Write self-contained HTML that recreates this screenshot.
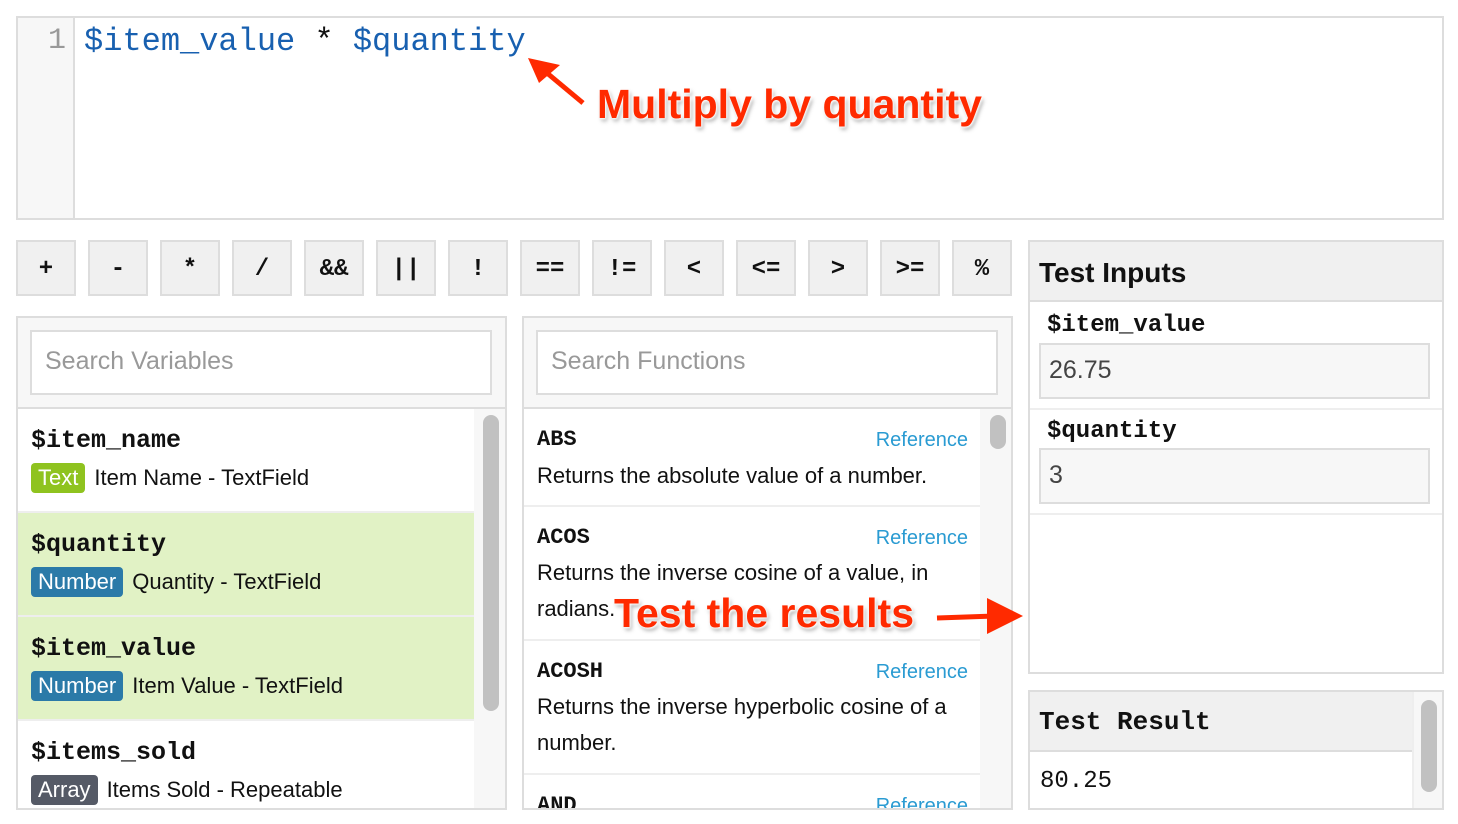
<!DOCTYPE html>
<html><head><style>
*{box-sizing:border-box;margin:0;padding:0}
body{width:1458px;height:824px;background:#fff;position:relative;overflow:hidden;font-family:"Liberation Sans",sans-serif;color:#111}
.a{position:absolute}
.mono{font-family:"Liberation Mono","Courier New",monospace}
.btn{position:absolute;top:240px;width:60px;height:56px;background:#f0f0f0;border:2px solid #ddd;font-family:"Liberation Mono",monospace;font-weight:bold;font-size:24px;text-align:center;line-height:56px}
.panel{position:absolute;border:2px solid #ddd;background:#f7f7f7}
.srch{position:absolute;background:#fff;border:2px solid #ddd;font-size:25px;color:#999;padding-left:13px;line-height:59px}
.item{position:absolute;left:0;width:456px;border-bottom:2px solid #eee}
.nm{position:absolute;left:13px;font-family:"Liberation Mono",monospace;font-weight:bold;font-size:25px}
.ds{position:absolute;left:13px;font-size:22px;white-space:nowrap}
.tag{display:inline-block;color:#fff;border-radius:4px;padding:0 7px;line-height:30px;margin-right:9px}
.fi{position:absolute;left:0;width:456px;border-bottom:2px solid #eee;background:#fff}
.ref{position:absolute;right:12px;color:#2a9bd2;font-size:20px}
.big{font-weight:bold;color:#ff2a00;font-size:41px;text-shadow:0 0 3px #fff,1px 1px 2px #fff,2px 3px 4px rgba(0,0,0,.35)}
</style></head><body>
<div class="a" style="left:16px;top:16px;width:1428px;height:204px;border:2px solid #ddd"></div>
<div class="a" style="left:18px;top:18px;width:57px;height:200px;background:#f7f7f7;border-right:2px solid #ddd"></div>
<div class="a mono" style="left:48px;top:24px;font-size:30px;color:#999">1</div>
<div class="a mono" style="left:84px;top:23px;font-size:32px;color:#1860b0;white-space:pre">$item_value <span style="color:#111">*</span> $quantity</div>
<svg class="a" style="left:525px;top:55px" width="65" height="55"><path d="M58 48 L22 18" stroke="#ff2a00" stroke-width="5"/><path d="M3 3 L35 10 L14 28 Z" fill="#ff2a00"/></svg>
<div class="a big" style="left:597px;top:81px">Multiply by quantity</div>

<div class="btn" style="left:16px">+</div>
<div class="btn" style="left:88px">-</div>
<div class="btn" style="left:160px">*</div>
<div class="btn" style="left:232px">/</div>
<div class="btn" style="left:304px">&amp;&amp;</div>
<div class="btn" style="left:376px">||</div>
<div class="btn" style="left:448px">!</div>
<div class="btn" style="left:520px">==</div>
<div class="btn" style="left:592px">!=</div>
<div class="btn" style="left:664px">&lt;</div>
<div class="btn" style="left:736px">&lt;=</div>
<div class="btn" style="left:808px">&gt;</div>
<div class="btn" style="left:880px">&gt;=</div>
<div class="btn" style="left:952px">%</div>

<div class="panel" style="left:16px;top:316px;width:491px;height:494px;overflow:hidden">
 <div class="srch" style="left:12px;top:12px;width:462px;height:65px">Search Variables</div>
 <div class="a" style="left:0;top:89px;width:491px;height:2px;background:#ddd"></div>
 <div class="item" style="top:91px;height:104px;background:#fff"><div class="nm" style="top:17px">$item_name</div><div class="ds" style="top:54px"><span class="tag" style="background:#8fc31f">Text</span>Item Name - TextField</div></div>
 <div class="item" style="top:195px;height:104px;background:#e1f2c5"><div class="nm" style="top:17px">$quantity</div><div class="ds" style="top:54px"><span class="tag" style="background:#2b7aa8">Number</span>Quantity - TextField</div></div>
 <div class="item" style="top:299px;height:104px;background:#e1f2c5"><div class="nm" style="top:17px">$item_value</div><div class="ds" style="top:54px"><span class="tag" style="background:#2b7aa8">Number</span>Item Value - TextField</div></div>
 <div class="item" style="top:403px;height:104px;background:#fff;border:0"><div class="nm" style="top:17px">$items_sold</div><div class="ds" style="top:54px"><span class="tag" style="background:#555a66">Array</span>Items Sold - Repeatable</div></div>
 <div class="a" style="left:465px;top:97px;width:16px;height:296px;background:#c1c1c1;border-radius:8px"></div>
</div>

<div class="panel" style="left:522px;top:316px;width:491px;height:494px;overflow:hidden">
 <div class="srch" style="left:12px;top:12px;width:462px;height:65px">Search Functions</div>
 <div class="a" style="left:0;top:89px;width:491px;height:2px;background:#ddd"></div>
 <div class="fi" style="top:91px;height:98px"><div class="nm" style="top:18px;font-size:22px">ABS</div><div class="ref" style="top:20px">Reference</div><div class="ds" style="top:54px">Returns the absolute value of a number.</div></div>
 <div class="fi" style="top:189px;height:134px"><div class="nm" style="top:18px;font-size:22px">ACOS</div><div class="ref" style="top:20px">Reference</div><div class="ds" style="top:48px;line-height:36px">Returns the inverse cosine of a value, in<br>radians.</div></div>
 <div class="fi" style="top:323px;height:134px"><div class="nm" style="top:18px;font-size:22px">ACOSH</div><div class="ref" style="top:20px">Reference</div><div class="ds" style="top:48px;line-height:36px">Returns the inverse hyperbolic cosine of a<br>number.</div></div>
 <div class="fi" style="top:457px;height:60px;border:0"><div class="nm" style="top:18px;font-size:22px">AND</div><div class="ref" style="top:20px">Reference</div></div>
 <div class="a" style="left:466px;top:97px;width:16px;height:34px;background:#c1c1c1;border-radius:8px"></div>
</div>
<div class="a big" style="left:614px;top:590px">Test the results</div>
<svg class="a" style="left:935px;top:596px" width="90" height="42"><path d="M2 22 L60 20" stroke="#ff2a00" stroke-width="5"/><path d="M52 2 L88 20 L52 38 Z" fill="#ff2a00"/></svg>

<div class="a" style="left:1028px;top:240px;width:416px;height:434px;border:2px solid #ddd;background:#fff">
 <div class="a" style="left:0;top:0;width:412px;height:60px;background:#f0f0f0;border-bottom:2px solid #ddd;font-weight:bold;font-size:28px;padding:15px 0 0 9px">Test Inputs</div>
 <div class="a mono" style="left:17px;top:70px;font-weight:bold;font-size:24px">$item_value</div>
 <div class="a" style="left:9px;top:101px;width:391px;height:56px;background:#f7f7f7;border:2px solid #ddd;font-size:25px;color:#444;padding:11px 0 0 8px">26.75</div>
 <div class="a" style="left:0;top:166px;width:412px;height:2px;background:#eee"></div>
 <div class="a mono" style="left:17px;top:176px;font-weight:bold;font-size:24px">$quantity</div>
 <div class="a" style="left:9px;top:206px;width:391px;height:56px;background:#f7f7f7;border:2px solid #ddd;font-size:25px;color:#444;padding:11px 0 0 8px">3</div>
 <div class="a" style="left:0;top:271px;width:412px;height:2px;background:#eee"></div>
</div>

<div class="a" style="left:1028px;top:690px;width:416px;height:120px;border:2px solid #ddd;background:#fff;overflow:hidden">
 <div class="a" style="left:0;top:0;width:382px;height:60px;background:#f0f0f0;border-bottom:2px solid #ddd;font-family:'Liberation Mono',monospace;font-weight:bold;font-size:26px;padding:15px 0 0 9px">Test Result</div>
 <div class="a mono" style="left:10px;top:76px;font-size:24px">80.25</div>
 <div class="a" style="left:382px;top:0;width:30px;height:120px;background:#f7f7f7;border-left:2px solid #eee"></div>
 <div class="a" style="left:391px;top:8px;width:16px;height:92px;background:#c1c1c1;border-radius:8px"></div>
</div>
</body></html>
